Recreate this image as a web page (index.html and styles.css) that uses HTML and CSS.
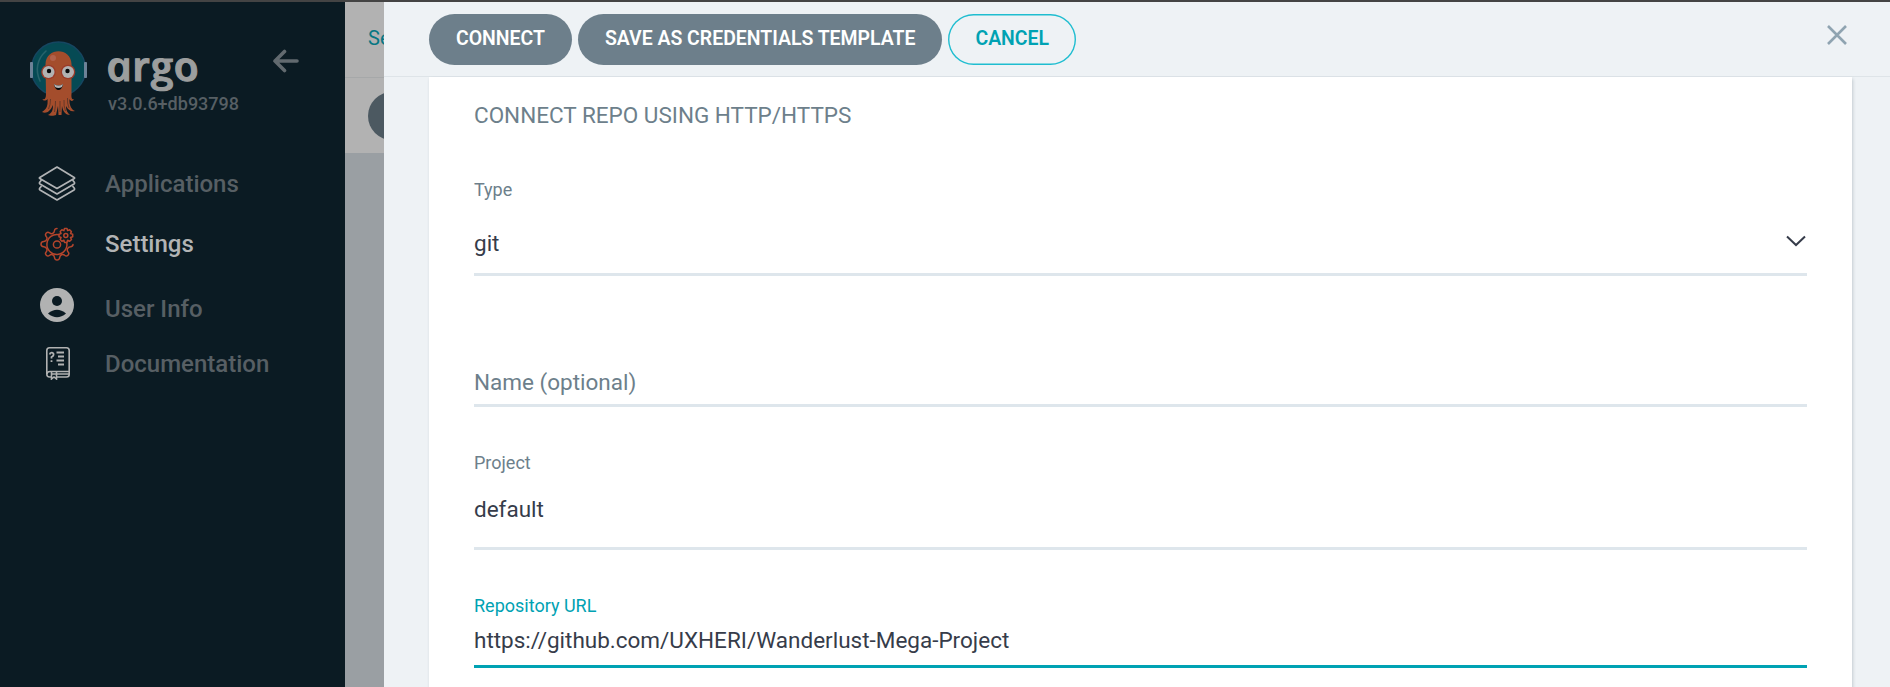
FILE: index.html
```html
<!DOCTYPE html>
<html lang="en">
<head>
<meta charset="utf-8">
<title>Argo CD - Settings</title>
<link rel="stylesheet" href="styles.css">
</head>
<body>
<div class="app">
  <aside class="sidebar">
    <header class="brand">
      <svg class="mascot" width="58" height="76" viewBox="0 0 58 76">
        <circle cx="28.500" cy="28" r="27" fill="#064a54" stroke="#164661" stroke-width="1.500"/>
        <path d="M16 10C7 18 5 29 10 40" fill="none" stroke="#28636b" stroke-width="1.600" stroke-linecap="round"/>
        <rect x="0" y="21" width="3" height="16" rx=".8" fill="#6d8297"/>
        <rect x="54" y="21" width="3" height="16" rx=".8" fill="#6d8297"/>
        <path d="M15.500 23C16 6 41 6 41.500 23V53C41 58 43 59 44 58C43 61 40 60 39.500 58C39 65 42 69 45 70C41 71 38 69 36 65C36 70 38 72 40 74C36 74 33 71 32 65L31.500 74H28.500L28 65L26 74C24 75 20 75 18 74C22 72 23 69 23 64C20 71 16 73 12 71C17 68 18 64 17.500 58C16 60 13 60 12.500 58C15 59 16 57 16 53Z" fill="#a44d2c"/>
        <path d="M20.500 58Q20.500 64 18.500 68M25.500 60Q25.500 66 24.500 71M30 60V71M34 59Q33.500 65 35.500 70M37.500 57Q37 62 39 67" fill="none" stroke="#5f3527" stroke-width=".9"/>
        <circle cx="23" cy="17" r="3" fill="#b1614a"/>
        <circle cx="18.500" cy="31" r="7.300" fill="#9b3b29"/><circle cx="38" cy="31" r="7.300" fill="#9b3b29"/>
        <circle cx="18.500" cy="31" r="6" fill="#b1b2b2"/><circle cx="38" cy="31" r="6" fill="#b1b2b2"/>
        <circle cx="19" cy="30" r="2.200" fill="#05080a"/><circle cx="37.500" cy="30" r="2.200" fill="#05080a"/>
        <path d="M24 43Q28.500 46 33 43C32 51 25 51 24 43Z" fill="#05080a"/>
        <path d="M24 43Q28.500 46 33 43L32 46Q28.500 48 25 46Z" fill="#b1b2b2"/>
      </svg>
      <div class="brand-text">
        <div class="wordmark">argo</div>
        <div class="version">v3.0.6+db93798</div>
      </div>
      <svg class="back" width="28" height="24" viewBox="0 0 28 24" fill="none" stroke="#626a6f" stroke-width="3.600" stroke-linecap="round" stroke-linejoin="round"><path d="M12.500 2.500L3 12L12.500 21.500M3 12H25"/></svg>
    </header>
    <nav class="nav">
      <a class="nav-item nav-apps">
        <svg width="38" height="36" viewBox="0 0 38 36" fill="none" stroke="#b1b3b5" stroke-width="1.700" stroke-linejoin="round"><path d="M19 1L36.200 11.500Q37 12 36.200 12.500L19 22.500L1.800 12.500Q1 12 1.800 11.500Z"/><path d="M3.500 14L1.500 16.500Q1.200 17.500 2 18L19 28L36 18Q36.800 17.500 36.500 16.500L34.500 14"/><path d="M3.500 20L1.500 22.500Q1.200 23.500 2 24L19 34L36 24Q36.800 23.500 36.500 22.500L34.500 20"/></svg>
        <span>Applications</span>
      </a>
      <a class="nav-item nav-settings">
        <svg width="34" height="34" viewBox="0 0 34 34" fill="none" stroke="#b5452c" stroke-width="1.500" stroke-linejoin="round" stroke-linecap="round"><path d="M17 1.500Q14.800 1.500 14.500 3.500Q14.300 6 12.500 6.500Q11 7.300 9.500 5.800Q7.800 4.500 6.300 6Q4.700 7.700 6.200 9.500Q7.500 10.700 6.700 12.500Q6 14.300 3.800 14.500Q1 14.700 1 17.200Q1 19.500 3.800 19.800Q6 20 6.700 21.800Q7.500 23.500 6.200 24.900Q4.700 26.600 6.300 28.200Q7.900 29.800 9.600 28.300Q11 27 12.600 27.700Q14.300 28.400 14.500 30.500Q14.800 33 17 33Q19.400 33 19.700 30.500Q19.900 28.400 21.600 27.700Q23.300 27 24.700 28.300Q26.400 29.800 28 28.200Q29.600 26.600 28.100 24.900Q26.800 23.500 27.500 21.800Q28.200 20 30.500 19.800Q33 19.500 33 17.500"/><path d="M19 7.700A10 10 0 1 0 26.700 15.500"/><circle cx="17" cy="17.500" r="3.600"/><circle cx="25.800" cy="8.500" r="2"/><path d="M24.500 1.500H27L27.600 3.600L29.600 2.800L31.400 4.600L30.500 6.600L32.700 7.300V9.800L30.500 10.500L31.500 12.500L29.700 14.200L27.600 13.300L27 15.400H24.500L23.900 13.300L21.900 14.200L20.200 12.500L21.100 10.500L19 9.800V7.300L21.100 6.600L20.200 4.600L21.900 2.800L23.900 3.600Z"/></svg>
        <span>Settings</span>
      </a>
      <a class="nav-item nav-user">
        <svg width="34" height="34" viewBox="0 0 34 34"><circle cx="17" cy="17" r="17" fill="#b1b2b2"/><circle cx="17" cy="13" r="5" fill="#0b1b23"/><path d="M8 25.500Q17 18 26 25.500Q17 33 8 25.500Z" fill="#0b1b23"/></svg>
        <span>User Info</span>
      </a>
      <a class="nav-item nav-docs">
        <svg width="24" height="33" viewBox="0 0 24 33" fill="none" stroke="#b1b2b2" stroke-width="1.600"><path d="M5 30H3.500Q.8 30 .8 27V3.500Q.8 .8 3.500 .8H20.500Q23.200 .8 23.200 3.500V27.500Q23.200 30 20.500 30H11"/><path d="M1 27Q1 24.500 4 24.500H23M5 27H23"/><path d="M5.500 25V32L8 30L10.500 32V25" /><path d="M10.500 5.500H18M12 9.500H18M10.500 13.500H18M12 17.500H18" stroke-width="1.800"/><path d="M3.700 7.500Q4 5.500 6 5.700Q8 6 7.500 8Q7.200 9.200 5.500 10V11.500M5.500 13.300V15" stroke-width="1.800"/></svg>
        <span>Documentation</span>
      </a>
    </nav>
  </aside>
  <section class="backdrop">
    <div class="crumb">Settings</div>
    <div class="toolbar"><div class="toolbar-button"></div></div>
  </section>
  <main class="panel">
    <header class="panel-header">
      <button class="btn">CONNECT</button>
      <button class="btn">SAVE AS CREDENTIALS TEMPLATE</button>
      <button class="btn btn-outline">CANCEL</button>
      <svg class="close" width="20" height="20" viewBox="0 0 20 20" stroke="#8fa4b1" stroke-width="2.600"><path d="M1 1L19 19M19 1L1 19"/></svg>
    </header>
    <form class="card">
      <h1 class="title">CONNECT REPO USING HTTP/HTTPS</h1>
      <div class="field field-type">
        <label class="label">Type</label>
        <div class="value"><span>git</span>
          <svg width="20" height="12" viewBox="0 0 20 12" fill="none" stroke="#363c4a" stroke-width="2"><path d="M1 1.500L10 10L19 1.500"/></svg>
        </div>
      </div>
      <div class="field field-name"><div class="placeholder">Name (optional)</div></div>
      <div class="field field-project">
        <label class="label">Project</label>
        <div class="value">default</div>
      </div>
      <div class="field field-repo">
        <label class="label">Repository URL</label>
        <div class="value">https://github.com/UXHERI/Wanderlust-Mega-Project</div>
      </div>
    </form>
  </main>
</div>
</body>
</html>
```
FILE: styles.css
```css
* { box-sizing: border-box; }
body { margin: 0; font-family: Roboto, "Liberation Sans", sans-serif; overflow: hidden; }
.app { display: flex; height: 687px; border-top: 2px solid #444; }

.sidebar { width: 345px; flex: none; background: #0b1b23; color: #575f64; }
.brand { display: flex; align-items: flex-start; height: 152px; padding: 39px 0 0 30px; }
.brand-text { width: 165px; margin-left: 20px; }
.wordmark { height: 50px; margin-top: -1px; font: italic 600 41px/50px "Open Sans", sans-serif; color: #9c9e9e; -webkit-text-stroke: 1px #9c9e9e; transform: scaleX(1.08) skewX(12deg); transform-origin: 0 75%; }
.version { margin-top: 2px; font-size: 18px; line-height: 24px; font-weight: 500; white-space: nowrap; }
.back { margin: 8px 0 0 -1px; }
.nav-item { display: flex; align-items: center; font-size: 24px; font-weight: 500; line-height: 30px; }
.nav-item svg { flex: none; }
.nav-item span { margin-left: auto; width: 240px; }
.nav-apps { height: 60px; padding-left: 38px; }
.nav-settings { height: 60px; padding-left: 40px; color: #b2b4b5; }
.nav-user { height: 66px; padding-left: 40px; }
.nav-user svg { margin-bottom: 4px; }
.nav-user span { margin-top: 4px; }
.nav-docs { height: 48px; padding-left: 46px; }
.nav-docs svg { margin-bottom: 2px; }

.backdrop { width: 39px; flex: none; overflow: hidden; background: #9a9fa3; }
.crumb { height: 76px; padding: 21px 0 0 23px; background: #b2b2b2; border-bottom: 1px solid #a6a8a9; color: #077783; font-size: 20px; line-height: 30px; }
.toolbar { height: 75px; padding: 14px 0 0 23px; background: #b2b2b2; }
.toolbar-button { width: 140px; height: 48px; border-radius: 24px; background: #4c5961; }

.panel { flex: 1; overflow: hidden; background: #eef2f5; }
.panel-header { display: flex; align-items: flex-start; gap: 6px; height: 75px; padding: 12px 42px 0 45px; border-bottom: 1px solid #dee4e8; }
.btn { height: 51px; padding: 0 27px 1px; border: 0; border-radius: 26px; background: #6d7f8b; color: #fff; font: 600 19.450px/24px Roboto, sans-serif; white-space: nowrap; }
.btn-outline { background: transparent; box-shadow: inset 0 0 0 1.400px #1fbdd0; color: #00a2b3; }
.close { margin: 11px 1px 0 auto; }
.card { width: 1423px; height: 640px; margin-left: 45px; padding: 22px 45px 0; background: #fff; box-shadow: 1px 2px 3px rgba(100, 115, 125, .3); }
.title { margin: 0; font-size: 22.500px; font-weight: 400; line-height: 32px; color: #6d7f8b; }
.field { border-bottom: 3px solid #dee6ec; color: #363c4a; font-size: 22.500px; }
.label { display: block; font-size: 18px; line-height: 24px; color: #6d7f8b; }
.value { line-height: 30px; }
.field-type { height: 98px; margin-top: 47px; }
.field-type .value { display: flex; justify-content: space-between; align-items: center; margin-top: 26px; }
.field-type svg { margin: 0 1px 5px 0; }
.field-name { height: 43px; margin-top: 88px; }
.placeholder { line-height: 30px; padding-top: 3px; color: #6d7f8b; }
.field-project { height: 99px; margin-top: 44px; }
.field-project .value { margin-top: 19px; }
.field-repo { height: 74px; margin-top: 44px; border-color: #00a2b3; }
.field-repo .label { color: #00a2b3; }
.field-repo .value { margin-top: 7px; }
```
